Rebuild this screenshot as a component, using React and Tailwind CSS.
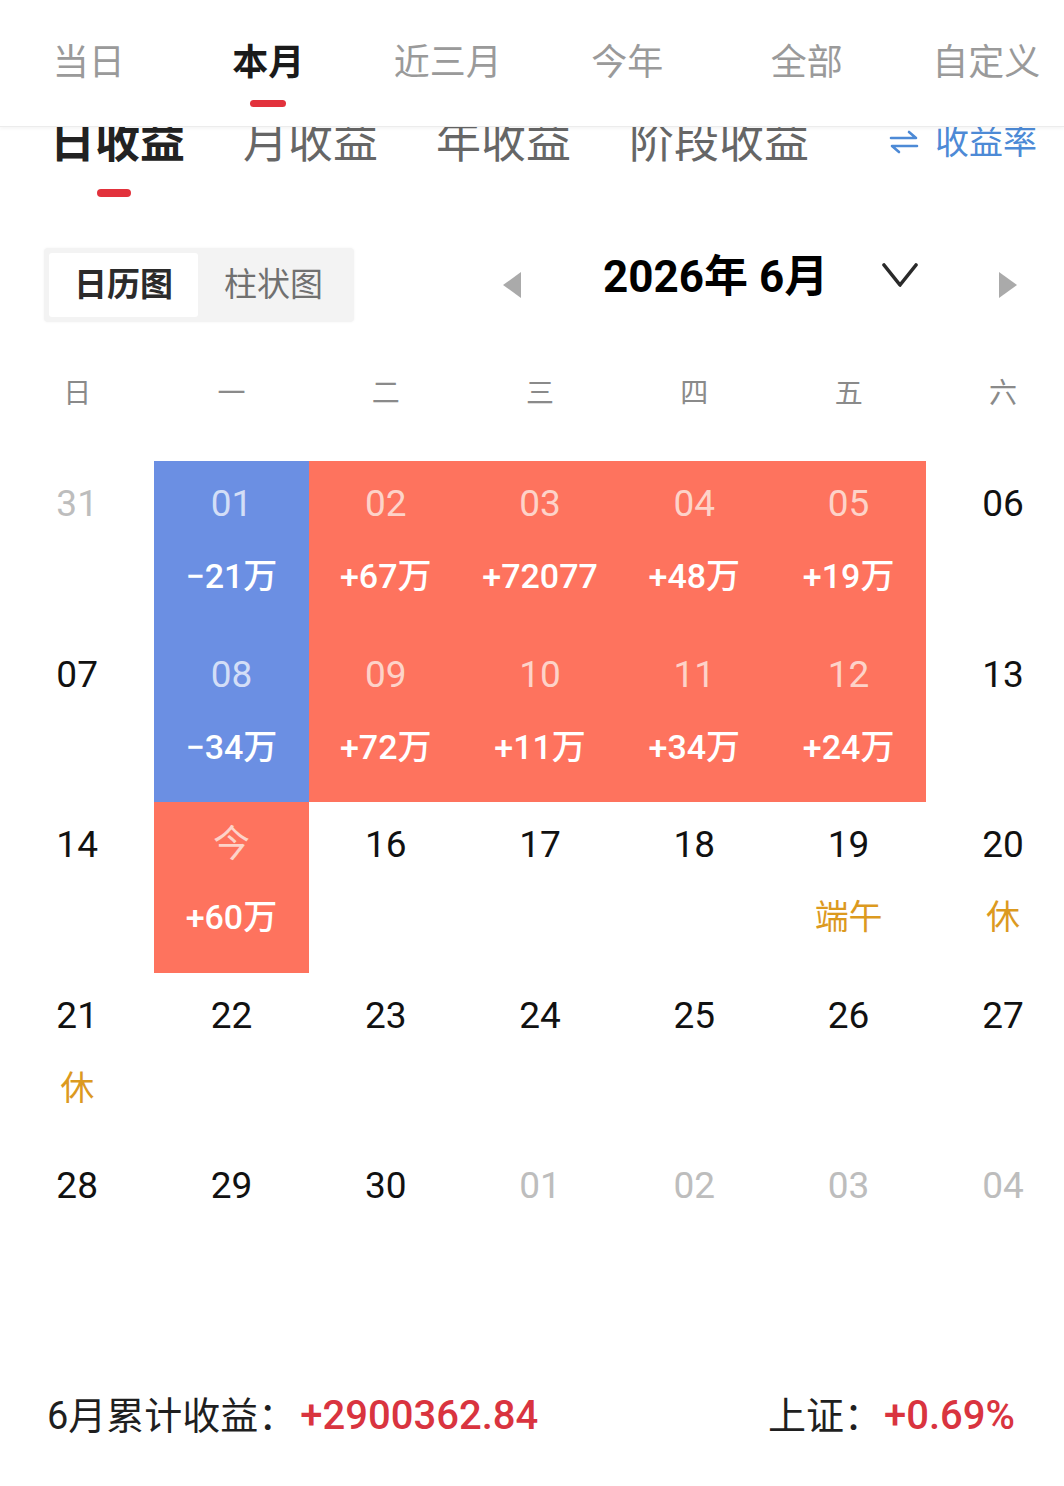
import React from "react";

const FONT = { fontFamily: '"Roboto", "Noto Sans CJK SC", sans-serif' };

const topTabs = ["当日", "本月", "近三月", "今年", "全部", "自定义"];
const subTabs = ["日收益", "月收益", "年收益", "阶段收益"];
const week = ["日", "一", "二", "三", "四", "五", "六"];

const cells = [
  { d: "31", k: "out" },
  { d: "01", k: "down", v: "−21万" },
  { d: "02", k: "up", v: "+67万" },
  { d: "03", k: "up", v: "+72077" },
  { d: "04", k: "up", v: "+48万" },
  { d: "05", k: "up", v: "+19万" },
  { d: "06", k: "normal" },
  { d: "07", k: "normal" },
  { d: "08", k: "down", v: "−34万" },
  { d: "09", k: "up", v: "+72万" },
  { d: "10", k: "up", v: "+11万" },
  { d: "11", k: "up", v: "+34万" },
  { d: "12", k: "up", v: "+24万" },
  { d: "13", k: "normal" },
  { d: "14", k: "normal" },
  { d: "今", k: "up", v: "+60万" },
  { d: "16", k: "normal" },
  { d: "17", k: "normal" },
  { d: "18", k: "normal" },
  { d: "19", k: "normal", h: "端午" },
  { d: "20", k: "normal", h: "休" },
  { d: "21", k: "normal", h: "休" },
  { d: "22", k: "normal" },
  { d: "23", k: "normal" },
  { d: "24", k: "normal" },
  { d: "25", k: "normal" },
  { d: "26", k: "normal" },
  { d: "27", k: "normal" },
  { d: "28", k: "normal" },
  { d: "29", k: "normal" },
  { d: "30", k: "normal" },
  { d: "01", k: "out" },
  { d: "02", k: "out" },
  { d: "03", k: "out" },
  { d: "04", k: "out" },
];

function Cell({ c }) {
  const bg =
    c.k === "up" ? "bg-[#fe735e]" : c.k === "down" ? "bg-[#6b8fe3]" : "bg-white";
  const dayColor =
    c.k === "out"
      ? "text-[#bdbdbd]"
      : c.k === "normal"
      ? "text-[#111111]"
      : c.k === "up"
      ? "text-[#fdd3c9]"
      : "text-[#d3def7]";
  return (
    <div className={`h-[170.6px] flex flex-col items-center pt-[24px] ${bg}`}>
      <div className={`h-[38px] leading-[38px] text-[37px] ${dayColor}`}>{c.d}</div>
      {c.v && (
        <div className="mt-[36px] h-[34px] leading-[34px] text-[34px] font-medium text-white">
          {c.v}
        </div>
      )}
      {c.h && (
        <div className="mt-[36px] h-[34px] leading-[34px] text-[34px] text-[#dc9a1f]">
          {c.h}
        </div>
      )}
    </div>
  );
}

export default function App() {
  return (
    <div className="w-[1064px] h-[1486px] bg-white overflow-hidden" style={FONT}>
      {/* top tab bar */}
      <div className="relative z-10 h-[127px] bg-white border-b border-[#ececec] shadow-[0_2px_3px_rgba(0,0,0,0.04)]">
        <div className="flex ml-[-1px] pt-[45px]">
          {topTabs.map((t, i) => (
            <div key={t} className="w-[179.5px] shrink-0 flex flex-col items-center">
              <div
                className={`h-[36px] leading-[36px] text-[36px] ${
                  i === 1 ? "text-[#1a1a1a] font-bold" : "text-[#9a9a9a]"
                }`}
              >
                {t}
              </div>
              {i === 1 && (
                <div className="mt-[19px] w-[36px] h-[7px] rounded-full bg-[#e2323c]" />
              )}
            </div>
          ))}
        </div>
      </div>

      {/* sub tabs, partly under the header */}
      <div className="-mt-[27px] h-[110px] flex items-start pt-[20px] pl-[50px] pr-[27px]">
        <div className="flex gap-[58px]">
          {subTabs.map((t, i) => (
            <div key={t} className="flex flex-col items-center">
              <div
                className={`h-[45px] leading-[45px] text-[45px] ${
                  i === 0 ? "text-[#222] font-semibold" : "text-[#666]"
                }`}
              >
                {t}
              </div>
              {i === 0 && (
                <div className="mt-[24px] w-[34px] h-[8px] rounded-full bg-[#e2323c] -translate-x-[4px]" />
              )}
            </div>
          ))}
        </div>
        <div className="ml-auto flex items-center h-[44px] text-[#4d8ad6]">
          <svg width="30" height="24" viewBox="0 0 30 24" fill="none" stroke="#4d8ad6" strokeWidth="2.6" strokeLinecap="round" strokeLinejoin="round">
            <path d="M2 8 H27 L20 2" />
            <path d="M28 16 H3 L10 22" />
          </svg>
          <span className="ml-[16px] text-[34px] leading-[34px]">收益率</span>
        </div>
      </div>

      {/* controls row */}
      <div className="mt-[38px] h-[74px] flex items-center">
        <div className="ml-[44px] w-[310px] h-[74px] bg-[#f3f3f3] rounded-[4px] p-[5px] flex shadow-[0_0_3px_rgba(0,0,0,0.05)]">
          <div className="w-[149px] h-[64px] bg-white rounded-[3px] flex items-center justify-center text-[33px] font-bold text-[#2b2b2b]">
            日历图
          </div>
          <div className="flex-1 flex items-center justify-center text-[33px] text-[#707070]">
            柱状图
          </div>
        </div>
        <svg className="ml-[149px]" width="18" height="26" viewBox="0 0 18 26">
          <path d="M18 0 L0 13 L18 26 Z" fill="#aaaaaa" />
        </svg>
        <div className="ml-[82px] -mt-[16px] w-[223px] text-[44px] leading-[44px] font-bold text-black whitespace-nowrap">
          2026年 6月
        </div>
        <svg className="ml-[56px] -mt-[19px]" width="36" height="25" viewBox="0 0 36 25" fill="none">
          <path d="M2 2 L18 22 L34 2" stroke="#2a2a2a" strokeWidth="3.6" strokeLinecap="round" strokeLinejoin="round" />
        </svg>
        <svg className="ml-[81px]" width="18" height="26" viewBox="0 0 18 26">
          <path d="M0 0 L18 13 L0 26 Z" fill="#aaaaaa" />
        </svg>
      </div>

      {/* week header */}
      <div className="pt-[58px] h-[139px] grid grid-cols-[repeat(7,154.3px)]">
        {week.map((w) => (
          <div key={w} className="h-[28px] leading-[28px] text-[28px] text-[#8a8a8a] text-center">
            {w}
          </div>
        ))}
      </div>

      {/* calendar grid */}
      <div className="grid grid-cols-[repeat(7,154.3px)]">
        {cells.map((c, i) => (
          <Cell key={i} c={c} />
        ))}
      </div>

      {/* footer */}
      <div className="mt-[82px] h-[40px] flex items-center justify-between pl-[47px] pr-[49px] text-[38px] leading-[40px]">
        <div className="flex items-center">
          <span className="text-[#1f1f1f]">6月累计收益：</span>
          <span className="ml-[4px] font-medium text-[40px] text-[#d9343f]">+2900362.84</span>
        </div>
        <div className="flex items-center">
          <span className="text-[#1f1f1f]">上证：</span>
          <span className="ml-[2px] font-medium text-[40px] text-[#d9343f]">+0.69%</span>
        </div>
      </div>
    </div>
  );
}
